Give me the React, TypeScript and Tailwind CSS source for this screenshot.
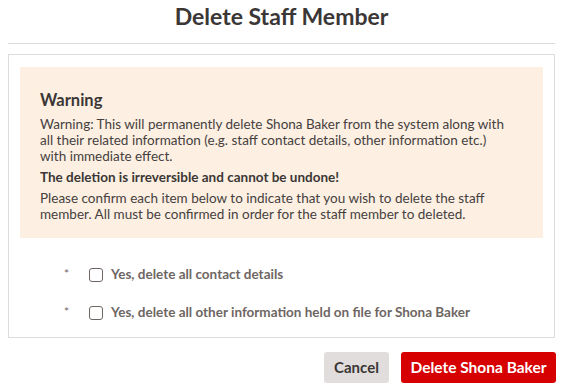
import React from 'react';

const App = () => {
  const items = [
    'Yes, delete all contact details',
    'Yes, delete all other information held on file for Shona Baker',
  ];

  return (
    <div
      className="w-[563px] h-[389px] bg-white px-2 text-[#3b3736]"
      style={{ fontFamily: 'Lato, "Liberation Sans", sans-serif' }}
    >
      {/* Title */}
      <h1 className="pt-[3px] h-[43px] text-center text-[23px] font-bold leading-[26px]">
        Delete Staff Member
      </h1>
      <div className="border-t border-[#dcdcdc]" />

      {/* Body */}
      <div className="mt-[10px] border border-[#dcdcdc] px-[11px] pt-3 pb-[17px]">
        <div className="bg-[#fdf0e2] px-5 pt-[22px] pb-4">
          <h2 className="text-[16.5px] font-bold leading-[22px] mb-[5px]">Warning</h2>
          <div className="max-w-[472px] text-[13.5px] leading-4 text-[#45403f]">
            <p>
              Warning: This will permanently delete Shona Baker from the system along with all
              their related information (e.g. staff contact details, other information etc.)
              with immediate effect.
            </p>
            <p className="mt-[5px] font-bold text-[#3b3736]">
              The deletion is irreversible and cannot be undone!
            </p>
            <p className="mt-[5px]">
              Please confirm each item below to indicate that you wish to delete the staff
              member. All must be confirmed in order for the staff member to deleted.
            </p>
          </div>
        </div>

        <div className="mt-[29px] flex flex-col gap-[23px]">
          {items.map((label) => (
            <div key={label} className="flex items-center h-[15px]">
              <span className="w-[24px] pl-[44px] box-content text-[12px] leading-none mt-[-2px] text-[#6e6663]">
                *
              </span>
              <span className="ml-[1px] w-[14px] h-[14px] rounded-[3px] border-[1.5px] border-[#6e6663]" />
              <span className="ml-2 text-[13.5px] font-bold text-[#6e6663]">{label}</span>
            </div>
          ))}
        </div>
      </div>

      {/* Footer buttons */}
      <div className="mt-[14px] flex justify-end gap-3">
        <button className="h-[31px] w-[65px] rounded-[3px] bg-[#e0dddc] text-[15px] font-bold text-[#3b3736]">
          Cancel
        </button>
        <button className="h-[31px] w-[155px] mr-[-1px] rounded-[3px] bg-[#d70000] text-[15.5px] font-bold text-white">
          Delete Shona Baker
        </button>
      </div>
    </div>
  );
};

export default App;
